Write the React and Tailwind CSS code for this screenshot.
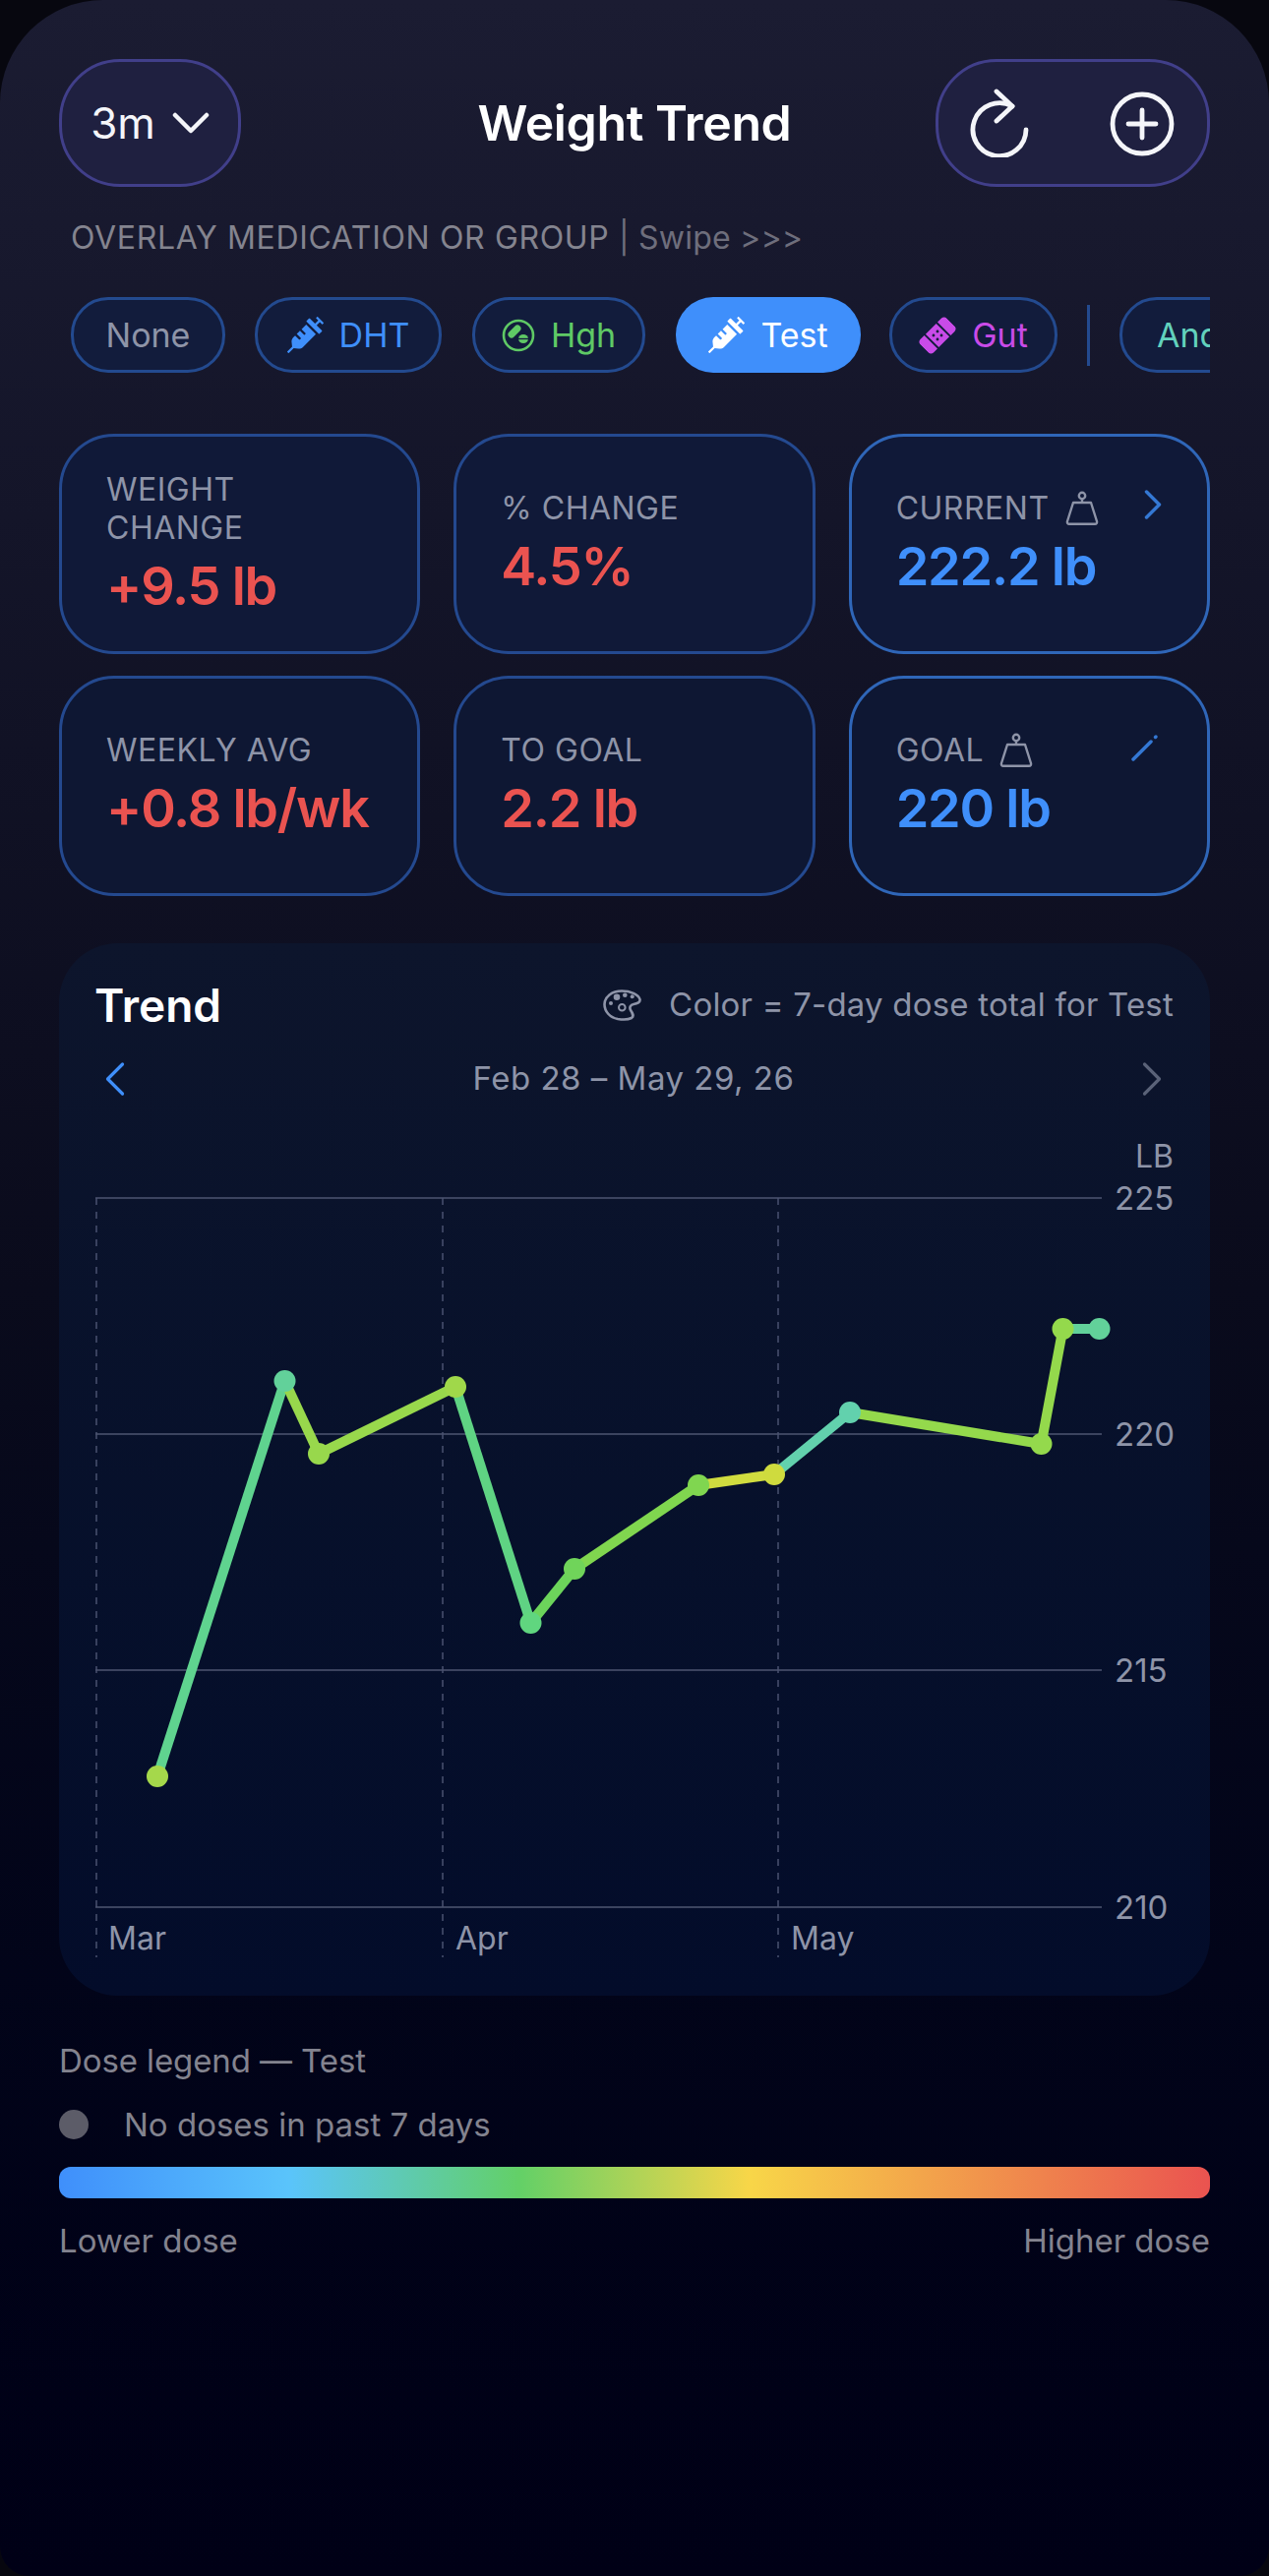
import React from 'react';
import { ChevronLeft, ChevronRight } from 'lucide-react';
import { FaSyringe, FaBandAid } from 'react-icons/fa';

const font = "font-['Inter','Liberation_Sans',sans-serif]";

const DownIcon = () => (
    <svg width="38" height="22" viewBox="0 0 38 22" fill="none" stroke="#f4f5f9" strokeWidth="4.500" strokeLinecap="round" strokeLinejoin="round">
        <path d="M3 3 L19 19 L35 3" />
    </svg>
);

const RefreshIcon = () => (
    <svg width="70" height="70" viewBox="0 0 70 70" fill="none" stroke="#f4f5f9" strokeWidth="4.800" strokeLinecap="round" strokeLinejoin="round">
        <path d="M63 42 A27 27 0 1 1 49 18" />
        <path d="M33 3 L49 18 L33 33" />
    </svg>
);

const PlusIcon = () => (
    <svg width="70" height="70" viewBox="0 0 70 70" fill="none" stroke="#f4f5f9" strokeWidth="4.800" strokeLinecap="round">
        <circle cx="35" cy="36" r="30" />
        <path d="M35 22 V50 M21 36 H49" />
    </svg>
);

const WeightIcon = () => (
    <svg width="34" height="36" viewBox="0 0 34 36" fill="none" stroke="#8e94a8" strokeWidth="2.400" strokeLinejoin="round">
        <circle cx="17" cy="5" r="3.200" />
        <path d="M17 8.200 V12 M8 12 H26 L32 31 Q32.500 33.800 30 33.800 H4 Q1.500 33.800 2 31 Z" />
    </svg>
);

const PencilIcon = () => (
    <svg width="28" height="28" viewBox="0 0 28 28" fill="none" stroke="#3478d4" strokeWidth="3.500" strokeLinecap="round">
        <path d="M2 26 L20 8" />
        <path d="M24.500 3.500 L25 3" />
    </svg>
);

const PillsIcon = () => (
    <svg width="34" height="36" viewBox="0 0 34 36" fill="none">
        <circle cx="17" cy="18" r="15" stroke="#5fc965" strokeWidth="2.600" />
        <path d="M10 17 L16 11" stroke="#5fc965" strokeWidth="7" strokeLinecap="round" />
        <ellipse cx="22" cy="21.500" rx="5" ry="4.500" fill="#5fc965" />
        <path d="M16 21.500 H28" stroke="#121c3c" strokeWidth="1.300" />
    </svg>
);

const PaletteIcon = () => (
    <svg width="40" height="33" viewBox="0 0 40 33" fill="none" stroke="#8e94a8" strokeWidth="2.600">
        <path d="M19 1.500 C28 1.500 36 5 37.500 10 C38 13 35 14.500 31 15 C28 15.500 26.500 18 28 21 C30 24 32 27 29 29 C25 31 20 30.800 15 30 C7 28.500 1.500 22.500 1.500 15 C1.500 7.500 9 1.500 19 1.500 Z" />
        <circle cx="19.300" cy="18.300" r="3.300" strokeWidth="2" />
        <circle cx="14" cy="7.700" r="3.300" fill="#8e94a8" stroke="none" />
        <circle cx="22.300" cy="5.700" r="2.300" fill="#8e94a8" stroke="none" />
        <circle cx="29.700" cy="7.300" r="2" fill="#8e94a8" stroke="none" />
        <circle cx="8" cy="14" r="2" fill="#8e94a8" stroke="none" />
    </svg>
);

const Chip = ({ children, className = '', width }) => (
    <div className={`flex h-[77px] shrink-0 items-center justify-center gap-[16px] rounded-[38px] border-[3px] border-[#234a8f] bg-[#121c3c] text-[34px] ${width} ${className}`}>
        {children}
    </div>
);

const StatCard = ({ label, value, color, bright, labelIcon, corner, fill }) => (
    <div className={`relative flex h-[224px] flex-col justify-center rounded-[56px] border-[3px] pl-[45px] ${fill} ${bright ? 'border-[#2f66b8]' : 'border-[#24498f]'}`}>
        <div className="flex items-center gap-[16px] text-[32px] leading-[39px] tracking-[0.5px] text-[#8e94a8]">
            <span>{label}</span>
            {labelIcon && <WeightIcon />}
        </div>
        <div className={`mt-[7px] text-[54px] leading-[66px] font-semibold tracking-[-1.2px] ${color}`}>{value}</div>
        {corner}
    </div>
);

const points = [
    { x: 160, y: 1806, c: '#a5d84b' },
    { x: 289.500, y: 1404, c: '#62d19a' },
    { x: 324, y: 1478, c: '#98d84c' },
    { x: 463, y: 1410, c: '#a0d84a' },
    { x: 539.500, y: 1650, c: '#60d67f' },
    { x: 584, y: 1595, c: '#70d45a' },
    { x: 710, y: 1510, c: '#80d650' },
    { x: 787, y: 1499, c: '#cfdb3e' },
    { x: 864, y: 1436, c: '#62d1ad' },
    { x: 1058.500, y: 1468, c: '#94d94c' },
    { x: 1080.500, y: 1351, c: '#94d94c' },
    { x: 1117.500, y: 1351, c: '#62d19a' },
];

// segment colours differ slightly from the dot they start at
const segColors = ['#5fd38f', '#98d84c', '#98d84c', '#5fd383', '#6cd45b', '#80d64f', '#d0dc3f', '#62d1ad', '#94d94c', '#94d94c', '#62d19a'];

const ticks = [
    { v: '225', y: 1218 },
    { v: '220', y: 1458 },
    { v: '215', y: 1698 },
    { v: '210', y: 1939 },
];

// chart coordinates are page coordinates, shifted by the svg origin
const originX = 60;
const originY = 1150;

const Chart = () => (
    <svg width="1170" height="850" viewBox="0 0 1170 850" className="block" fontFamily="Inter, 'Liberation Sans', sans-serif">
        <text x={1193 - originX} y={1187 - originY} fontSize="32" fill="#8e94a8" textAnchor="end">LB</text>
        {ticks.map((t) => (
            <g key={t.v}>
                <line x1={97 - originX} x2={1120 - originX} y1={t.y - originY} y2={t.y - originY} stroke="#4e5672" strokeWidth="1.500" />
                <text x={1133 - originX} y={t.y - originY + 12} fontSize="33" fill="#8e94a8">{t.v}</text>
            </g>
        ))}
        {[98, 450, 791].map((x) => (
            <line key={x} x1={x - originX} x2={x - originX} y1={1218 - originY} y2={1990 - originY} stroke="#4a5270" strokeWidth="1.500" strokeDasharray="7 7" />
        ))}
        {[['Mar', 110], ['Apr', 463], ['May', 804]].map(([m, x]) => (
            <text key={m} x={x - originX} y={1982 - originY} fontSize="32" fill="#8e94a8">{m}</text>
        ))}
        {segColors.map((c, i) => (
            <line key={i} x1={points[i].x - originX} y1={points[i].y - originY} x2={points[i + 1].x - originX} y2={points[i + 1].y - originY} stroke={c} strokeWidth="10" />
        ))}
        {points.map((p) => (
            <circle key={p.x} cx={p.x - originX} cy={p.y - originY} r="11" fill={p.c} />
        ))}
    </svg>
);

const App = () => {
    return (
        <div className={`h-[2619px] w-[1290px] overflow-hidden bg-[#07070f] ${font}`}>
            <div className="h-full w-full rounded-t-[105px] rounded-b-[30px] bg-gradient-to-b from-[#1b1c32] via-[#0a0b1c] to-[#000016] px-[60px] pt-[60px]">
                {/* header */}
                <div className="grid h-[130px] grid-cols-[1fr_auto_1fr] items-center">
                    <div className="flex h-[130px] w-[185px] items-center justify-center gap-[17px] rounded-[62px] border-[3px] border-[#413f8a] bg-[#1f2040] text-[44px] text-[#f4f5f9]">
                        3m <DownIcon />
                    </div>
                    <h1 className="text-[50px] font-semibold tracking-[-0.4px] text-white">Weight Trend</h1>
                    <div className="flex h-[130px] w-[279px] items-center justify-between justify-self-end rounded-[62px] border-[3px] border-[#413f8a] bg-[#1f2040] pr-[31px] pl-[26px]">
                        <RefreshIcon />
                        <PlusIcon />
                    </div>
                </div>

                <div className="mt-[32px] pl-[12px] text-[32px] leading-[40px] tracking-[0.65px] text-[#84848f]">
                    OVERLAY MEDICATION OR GROUP <span className="tracking-[0.2px] text-[#6e6e7c]">| Swipe &gt;&gt;&gt;</span>
                </div>

                {/* overlay chips */}
                <div className="mt-[40px] flex items-center overflow-hidden pl-[12px]">
                    <Chip width="w-[157px]" className="text-[#8e94a8]">None</Chip>
                    <Chip width="w-[190px]" className="ml-[30px] text-[#3f8ffb]"><FaSyringe size={37} />DHT</Chip>
                    <Chip width="w-[176px]" className="ml-[31px] text-[#5fc965]"><PillsIcon />Hgh</Chip>
                    <div className="ml-[31px] flex h-[77px] w-[188px] shrink-0 items-center justify-center gap-[16px] rounded-[38px] bg-[#3f8ffb] text-[34px] text-white"><FaSyringe size={37} />Test</div>
                    <Chip width="w-[171px]" className="ml-[29px] text-[#c94be8]"><FaBandAid size={38} className="-rotate-45" />Gut</Chip>
                    <div className="mx-[30px] h-[62px] w-[3px] shrink-0 bg-[#234a8f]" />
                    <Chip width="w-[150px]" className="justify-start pl-[35px] text-[#62d1bd]">Andro</Chip>
                </div>

                {/* stats */}
                <div className="mt-[62px] grid grid-cols-3 gap-x-[34px] gap-y-[22px]">
                    <StatCard fill="bg-[#101938]" label={<>WEIGHT<br />CHANGE</>} value="+9.5 lb" color="text-[#ea5350]" />
                    <StatCard fill="bg-[#101938]" label="% CHANGE" value="4.5%" color="text-[#ea5350]" />
                    <StatCard fill="bg-[#101938]" label="CURRENT" value="222.2 lb" color="text-[#3f8ffb]" bright labelIcon corner={<ChevronRight size={52} color="#3478d4" strokeWidth={1.6} className="absolute top-[43px] right-[29px]" />} />
                    <StatCard fill="bg-[#0e1733]" label="WEEKLY AVG" value="+0.8 lb/wk" color="text-[#ea5350]" />
                    <StatCard fill="bg-[#0e1733]" label="TO GOAL" value="2.2 lb" color="text-[#ea5350]" />
                    <StatCard fill="bg-[#0e1733]" label="GOAL" value="220 lb" color="text-[#3f8ffb]" bright labelIcon corner={<div className="absolute top-[56px] right-[49px]"><PencilIcon /></div>} />
                </div>

                {/* trend card */}
                <div className="mt-[48px] h-[1070px] overflow-hidden rounded-[60px] bg-gradient-to-b from-[#0d152c] to-[#030c2a]">
                    <div className="flex items-center justify-between px-[37px] pt-[35px]">
                        <div className="-ml-[1px] text-[46px] leading-[56px] font-semibold text-white">Trend</div>
                        <div className="flex items-center gap-[27px] text-[33px] tracking-[0.2px] text-[#8e94a8]">
                            <PaletteIcon />
                            Color = 7-day dose total for Test
                        </div>
                    </div>
                    <div className="flex items-center justify-between px-[37px] pt-[22px]">
                        <ChevronLeft size={60} color="#3f8ffb" strokeWidth={1.3} className="-my-[10px] -ml-[10px]" />
                        <div className="text-[33px] tracking-[0.5px] text-[#8e94a8]">Feb 28 – May 29, 26</div>
                        <ChevronRight size={60} color="#5a6278" strokeWidth={1.3} className="-my-[10px] -mr-[8px]" />
                    </div>
                    <div className="pt-[28px]">
                        <Chart />
                    </div>
                </div>

                {/* legend */}
                <div className="mt-[46px] text-[33px] leading-[40px] tracking-[-0.1px] text-[#83838f]">Dose legend — Test</div>
                <div className="mt-[25px] flex items-center gap-[36px] text-[33px] leading-[40px] text-[#83838f]">
                    <div className="size-[30px] rounded-full bg-[#5c5c68]" />
                    No doses in past 7 days
                </div>
                <div className="mt-[23px] h-[32px] rounded-[12px] bg-[linear-gradient(to_right,#3f8ffb_0%,#5ac4fb_20%,#63d067_40%,#f8d648_60%,#ea5350_100%)]" />
                <div className="mt-[23px] flex justify-between text-[33px] leading-[40px] text-[#83838f]">
                    <span>Lower dose</span>
                    <span>Higher dose</span>
                </div>
            </div>
        </div>
    );
};

export default App;
